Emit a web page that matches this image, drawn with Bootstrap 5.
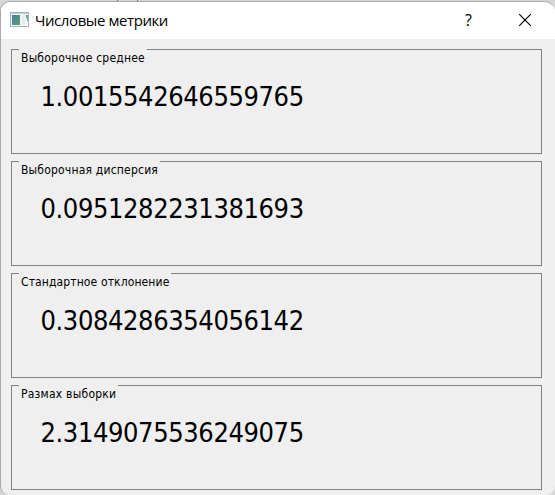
<!DOCTYPE html>
<html lang="ru">
<head>
<meta charset="utf-8">
<title>Числовые метрики</title>
<link href="https://cdn.jsdelivr.net/npm/bootstrap@5.3.0/dist/css/bootstrap.min.css" rel="stylesheet">
<style>
body{background:linear-gradient(90deg,transparent 117px,#666 117px 118px,transparent 118px 137px,#666 137px 138px,transparent 138px) 0 0/555px 1px no-repeat,#d6d6d6;width:555px;height:495px;color:#000}
.dialog{width:555px;height:494px;margin-top:1px;border:1px solid #a9a9a9;border-width:1px 0 0 1px;border-radius:10px 11px 9px 9px;background:#efefef}
.titlebar{height:37px;background:#fff;padding-left:9px}
.title-text{font:15px/20px "Open Sans","Noto Sans",sans-serif;margin:-2px 0 0 6px;letter-spacing:-.42px;white-space:nowrap}
.help{font:16px/20px "Open Sans",sans-serif;margin-right:46px;margin-top:-1px}
.close-icon{margin:0 23px 2px 0}
.app-icon{margin-bottom:1px}
.metrics{padding:10px 13px 0 10px;gap:7px}
.metric{height:105px;border:1px solid #828282}
.caption{font:12px/15px "DejaVu Sans Condensed",sans-serif;background:#efefef;margin:-1px 0 0 7px;padding:2px 0 0 2px;height:17px;white-space:nowrap}
.value{font:27px/34px "DejaVu Sans Condensed",sans-serif;letter-spacing:-.4px;margin:14px 0 0 28.5px}
.w1{width:128px;letter-spacing:.22px}.w2{width:141px;letter-spacing:.2px}.w3{width:152px;letter-spacing:.12px}.w4{width:99px;letter-spacing:.24px}
</style>
<script src="https://cdn.jsdelivr.net/npm/bootstrap@5.3.0/dist/js/bootstrap.bundle.min.js"></script>
</head>
<body class="overflow-hidden d-flex">
<main class="dialog overflow-hidden">
<header class="titlebar d-flex align-items-center">
<svg class="app-icon" width="19" height="16" viewBox="0 0 19 16"><defs><linearGradient id="g" x2="1" y2="1"><stop stop-color="#477ea6"/><stop offset="1" stop-color="#55a36d"/></linearGradient></defs><path fill="#a5afba" d="M0 0h19v15H0z"/><path fill="#f4f6f7" d="M1 1h17v13H1z"/><path fill="#c5cfd6" d="M1 1h17v1H1z"/><path fill="url(#g)" d="M2 3h8v10H2z"/><path fill="#e4e9ec" d="M12 3h3v10h-3z"/><path fill="#65af91" d="M16 3h2v6h-1V6h-1z"/></svg>
<span class="title-text">Числовые метрики</span>
<span class="help ms-auto">?</span>
<svg width="14" height="14" viewBox="0 0 14 14" class="close-icon"><path d="M1.2 1.2l11.6 11.6M12.8 1.2L1.2 12.8" stroke="#000" stroke-width="1.15"/></svg>
</header>
<div class="metrics d-flex flex-column">
<section class="metric"><div class="caption w1">Выборочное среднее</div><div class="value">1.0015542646559765</div></section>
<section class="metric"><div class="caption w2">Выборочная дисперсия</div><div class="value">0.0951282231381693</div></section>
<section class="metric"><div class="caption w3">Стандартное отклонение</div><div class="value">0.3084286354056142</div></section>
<section class="metric"><div class="caption w4">Размах выборки</div><div class="value">2.3149075536249075</div></section>
</div>
</main>
</body>
</html>
